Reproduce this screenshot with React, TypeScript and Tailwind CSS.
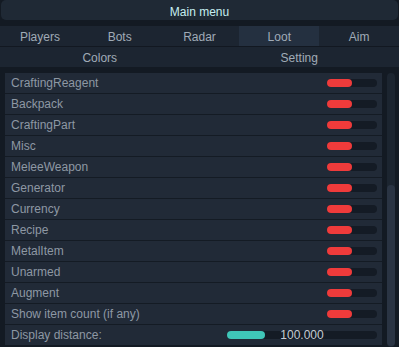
import React from "react";

const items = [
  "CraftingReagent",
  "Backpack",
  "CraftingPart",
  "Misc",
  "MeleeWeapon",
  "Generator",
  "Currency",
  "Recipe",
  "MetalItem",
  "Unarmed",
  "Augment",
  "Show item count (if any)",
];

const tabs = ["Players", "Bots", "Radar", "Loot", "Aim"];

export default function App() {
  return (
    <div
      className="w-[399px] h-[347px] overflow-hidden bg-[#131a23] flex flex-col text-[12px] leading-none"
      style={{ fontFamily: '"Liberation Sans", Arial, sans-serif' }}
    >
      <div className="h-[20px] mx-[1px] pt-[4px] rounded-[5px] bg-[#1f2935] flex items-center justify-center text-[#c6eef0]">
        Main menu
      </div>
      <div className="h-[6px]" />
      <div className="h-[20px] flex bg-[#1c2531] text-[#a0abb7]">
        {tabs.map((t) => (
          <div
            key={t}
            className={
              "flex-1 flex items-center justify-center pt-[2px] " +
              (t === "Loot" ? "bg-[#243040]" : "")
            }
          >
            {t}
          </div>
        ))}
      </div>
      <div className="h-[1px] bg-[#121821]" />
      <div className="h-[20px] flex bg-[#1c2531] text-[#a0abb7] pt-[2px]">
        <div className="flex-1 flex items-center justify-center">Colors</div>
        <div className="flex-1 flex items-center justify-center">Setting</div>
      </div>
      <div className="h-[6px]" />
      <div className="flex flex-1 min-h-0">
        <div className="w-[5px]" />
        <div className="w-[377px] flex flex-col">
          {items.map((name) => (
            <div key={name} className="h-[21px] flex flex-col">
              <div className="h-[20px] bg-[#212a37] flex items-center pl-[6px] pr-[5px] text-[#8e98a4]">
                <span className="flex-1">{name}</span>
                <div className="w-[50px] h-[8px] rounded-full bg-[#141b25] flex">
                  <div className="w-[25px] h-[8px] rounded-full bg-[#ef3b3b]" />
                </div>
              </div>
              <div className="h-[1px] bg-[#141b24]" />
            </div>
          ))}
          <div className="h-[20px] bg-[#212a37] flex items-center pl-[6px] pr-[5px] text-[#8e98a4]">
            <span className="flex-1">Display distance:</span>
            <div className="relative w-[150px] h-[8px] rounded-full bg-[#141b25]">
              <div className="w-[38px] h-[8px] rounded-full bg-[#3fc6b8]" />
              <div className="absolute inset-0 flex items-center justify-center text-[#c4cbd3]">
                100.000
              </div>
            </div>
          </div>
        </div>
        <div className="w-[5px]" />
        <div className="w-[8px] pb-[1px] rounded-full bg-[#1c2530] flex flex-col">
          <div className="h-[112px]" />
          <div className="flex-1 rounded-full bg-[#2a3443]" />
        </div>
      </div>
    </div>
  );
}
